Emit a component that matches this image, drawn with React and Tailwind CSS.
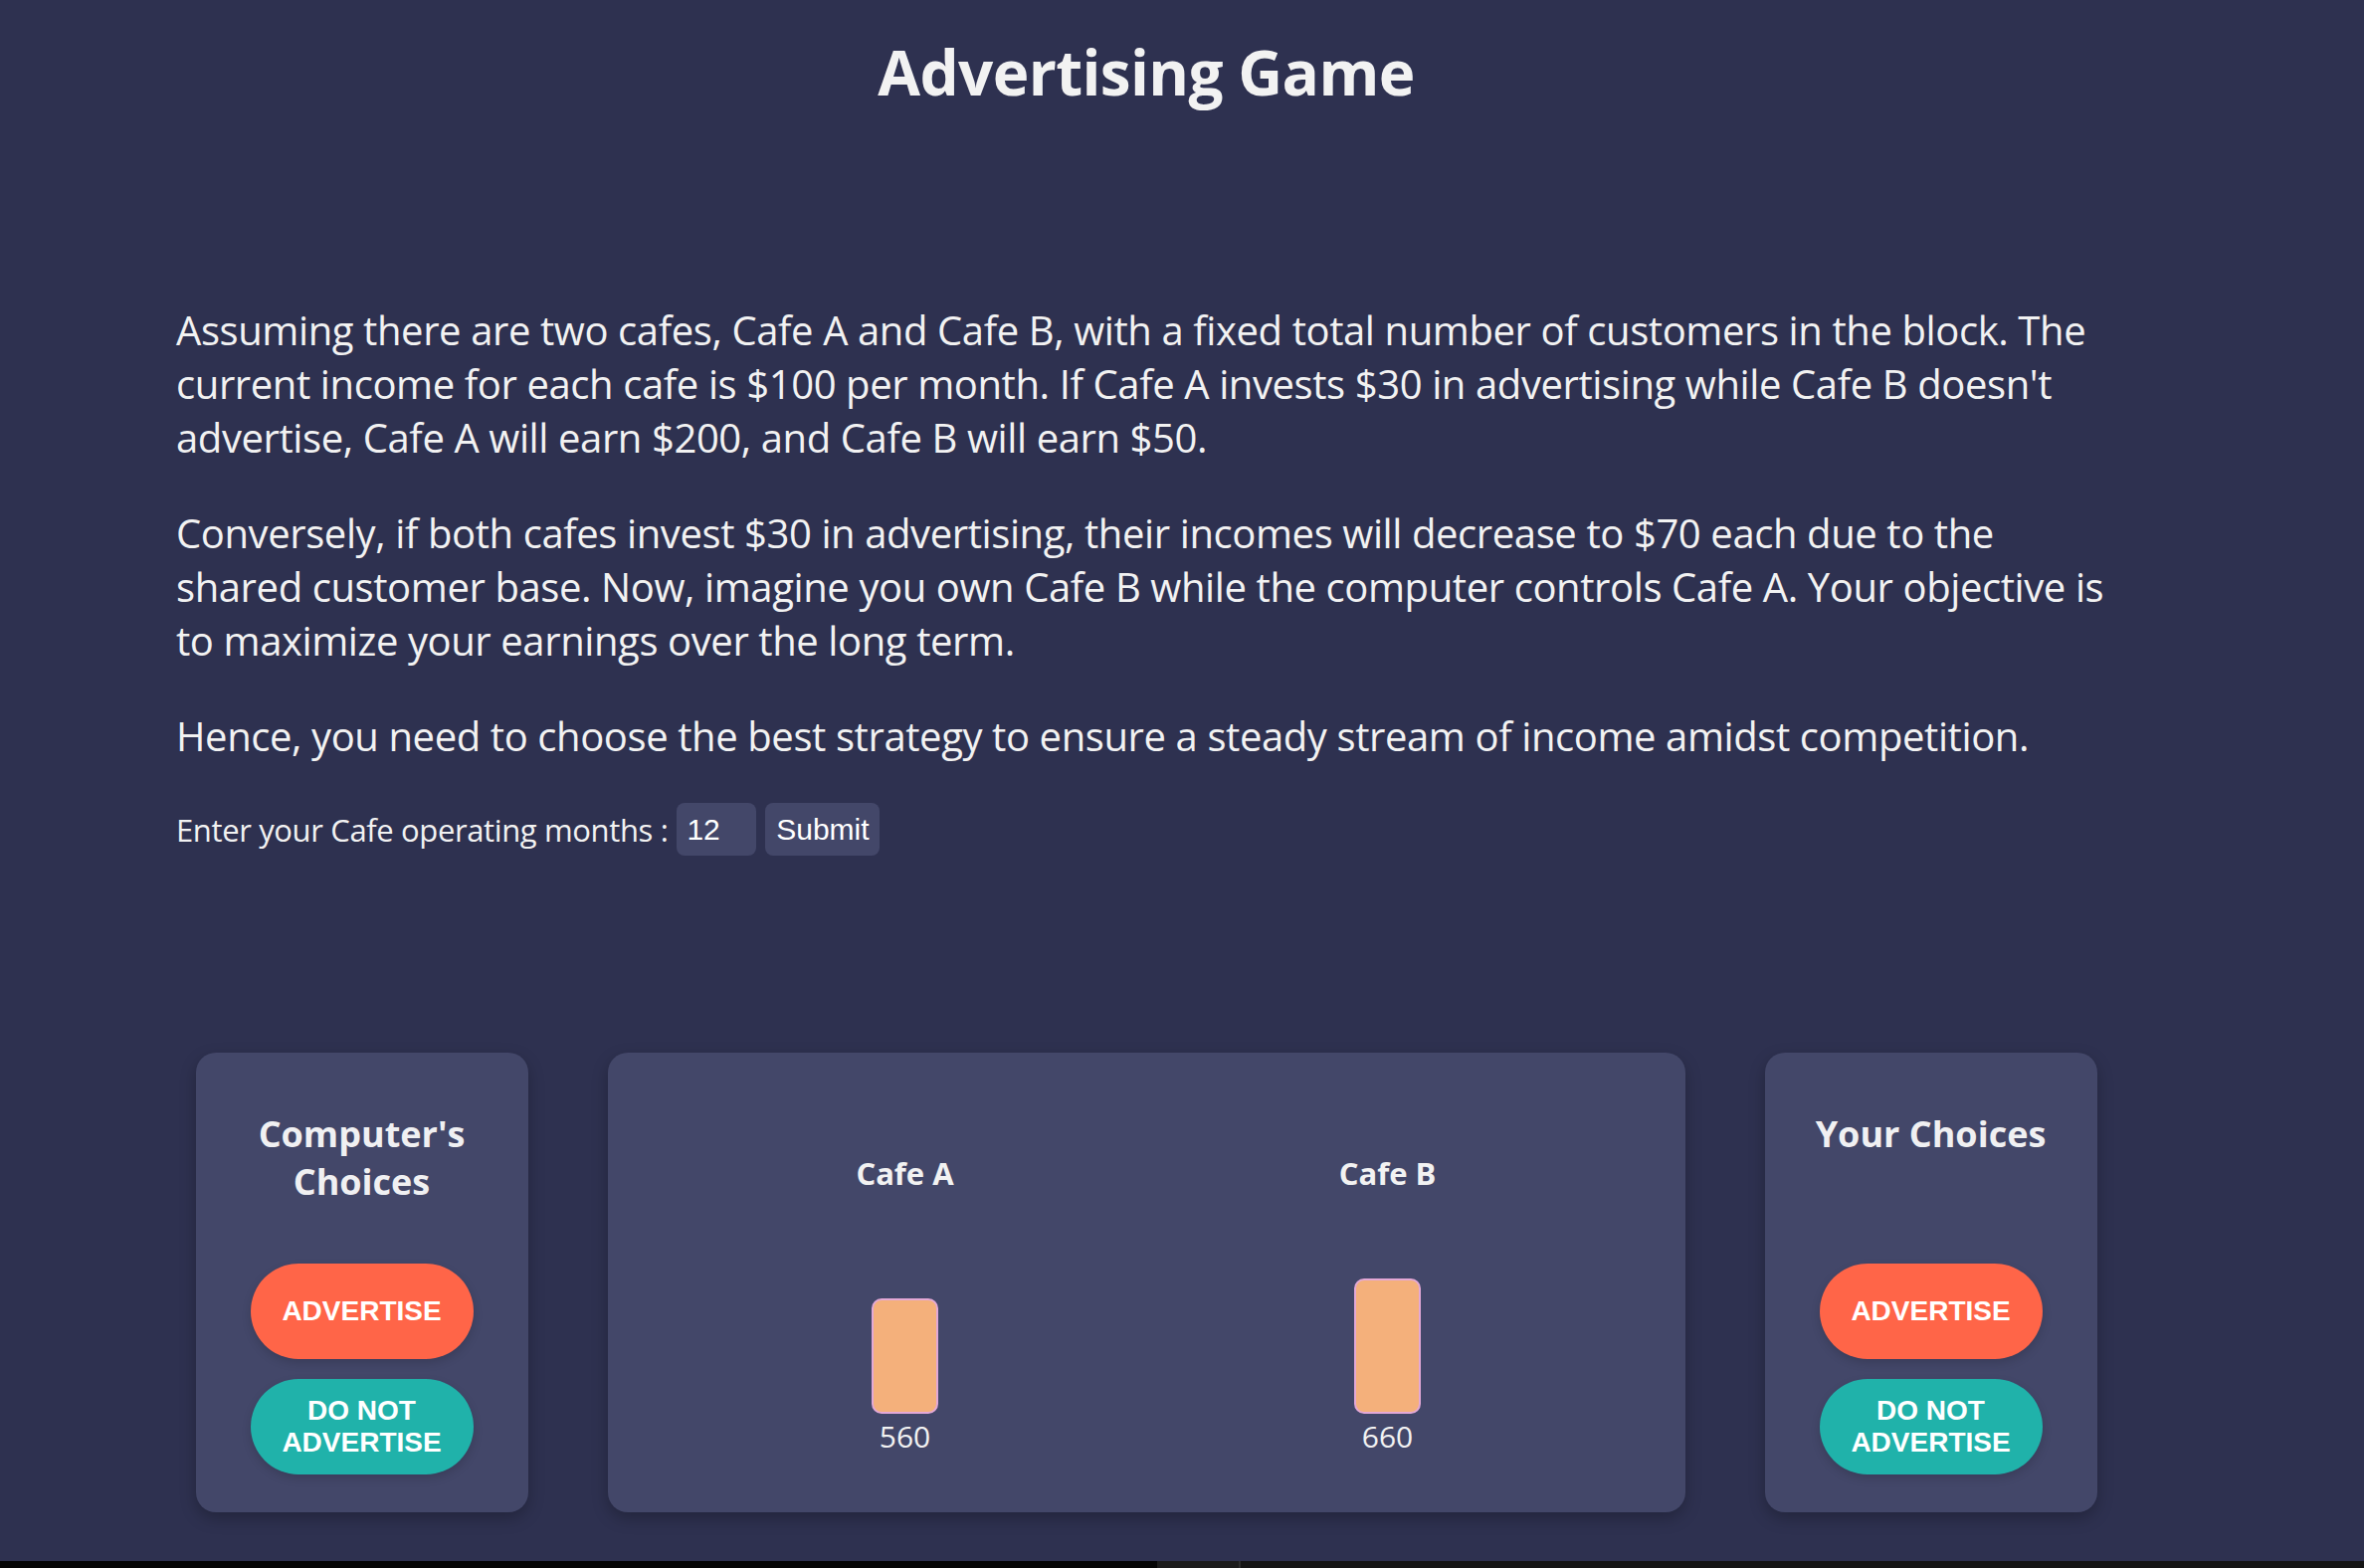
import React, { useState } from "react";

const cafes = [
    { name: "Cafe A", total: 560 },
    { name: "Cafe B", total: 660 },
];

const ChoiceCard = ({ title }) => (
    <div className="w-[334px] h-[462px] rounded-[20px] bg-[#434769] shadow-[0_6px_16px_rgba(0,0,0,0.25)] flex flex-col items-center pt-[58px] px-[30px]">
        <h2 className="h-[154px] text-[36px] leading-[48px] font-bold text-center text-[#f0f0f2]">{title}</h2>
        <div className="flex flex-col gap-[20px]">
            <button className="w-[224px] h-[96px] rounded-full bg-[#ff6548] text-white font-['Liberation_Sans',Arial,sans-serif] font-bold text-[28px] leading-[32px] shadow-[0_4px_10px_rgba(0,0,0,0.15)]">
                ADVERTISE
            </button>
            <button className="w-[224px] h-[96px] rounded-full bg-[#20b2aa] text-white font-['Liberation_Sans',Arial,sans-serif] font-bold text-[28px] leading-[32px] shadow-[0_4px_10px_rgba(0,0,0,0.15)]">
                DO NOT<br />ADVERTISE
            </button>
        </div>
    </div>
);

const App = () => {
    const [months, setMonths] = useState("12");

    return (
        <div className="w-full h-[1576px] flex flex-col bg-[#2e3150] font-['Open_Sans',sans-serif] text-[#f2f2f2]">
            <div className="flex-1 w-[2304px]">
                <h1 className="pt-[41px] text-[62px] leading-none font-bold text-center tracking-[-0.01em] text-[#f2f2f2]">Advertising Game</h1>

                <div className="mt-[202px] ml-[177px] w-[1950px] text-[40px] leading-[54px] tracking-[-0.01em]">
                    <p className="mb-[42px]">
                        Assuming there are two cafes, Cafe A and Cafe B, with a fixed total number of customers in the block. The current income for each cafe is $100 per month. If Cafe A invests $30 in advertising while Cafe B doesn't advertise, Cafe A will earn $200, and Cafe B will earn $50.
                    </p>
                    <p className="mb-[42px]">
                        Conversely, if both cafes invest $30 in advertising, their incomes will decrease to $70 each due to the shared customer base. Now, imagine you own Cafe B while the computer controls Cafe A. Your objective is to maximize your earnings over the long term.
                    </p>
                    <p className="mb-[40px]">
                        Hence, you need to choose the best strategy to ensure a steady stream of income amidst competition.
                    </p>
                    <div className="flex items-center gap-[9px] h-[53px] tracking-normal">
                        <span className="text-[31px] tracking-[-0.012em]">Enter your Cafe operating months :</span>
                        <input
                            type="text"
                            value={months}
                            onChange={(e) => setMonths(e.target.value)}
                            className="w-[80px] h-[53px] px-[10px] rounded-[8px] bg-[#434769] text-white text-[30px] font-['Liberation_Sans',Arial,sans-serif] outline-none"
                        />
                        <button className="w-[115px] h-[53px] rounded-[8px] bg-[#434769] text-white text-[30px] font-['Liberation_Sans',Arial,sans-serif]">
                            Submit
                        </button>
                    </div>
                </div>

                <div className="mt-[198px] flex justify-center gap-[80px]">
                    <ChoiceCard title="Computer's Choices" />

                    <div className="w-[1083px] h-[462px] rounded-[20px] bg-[#434769] shadow-[0_6px_16px_rgba(0,0,0,0.25)] flex justify-center gap-[285px] pt-[106px]">
                        {cafes.map((cafe) => (
                            <div key={cafe.name} className="w-[200px] flex flex-col items-center">
                                <h3 className="text-[31px] leading-none font-bold text-[#f2f2f2]">{cafe.name}</h3>
                                <div className="h-[226px] flex items-end">
                                    <div
                                        className="w-[67px] rounded-[10px] bg-[#f4b07b] border-2 border-[#e3a8d6]"
                                        style={{ height: `${Math.round(cafe.total * 0.2065)}px` }}
                                    />
                                </div>
                                <span className="mt-[8px] text-[30px] leading-none">{cafe.total}</span>
                            </div>
                        ))}
                    </div>

                    <ChoiceCard title="Your Choices" />
                </div>
            </div>
            <div className="h-[7px] flex">
                <div className="w-[1163px] bg-[#050505]" />
                <div className="w-[82px] bg-[#1b1b1b]" />
                <div className="w-[2px] bg-[#2c2c2c]" />
                <div className="flex-1 bg-[#151515]" />
            </div>
        </div>
    );
};

export default App;
